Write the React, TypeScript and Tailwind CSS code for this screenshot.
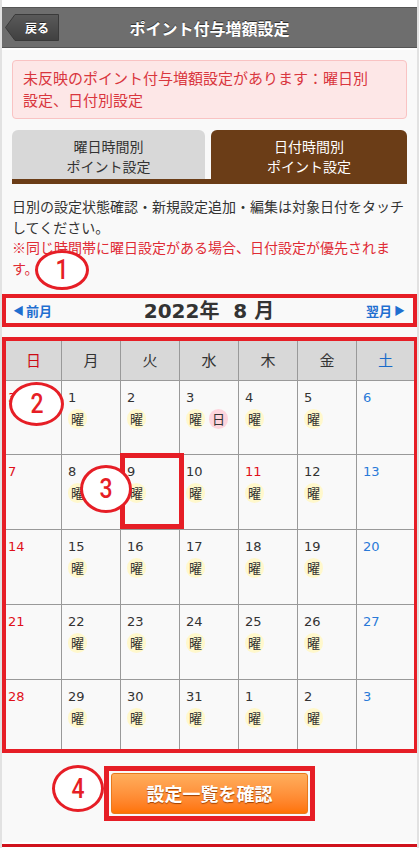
import React from 'react'

type Day = { d: number; c: 'red' | 'blue' | 'dark'; you?: boolean; hi?: boolean }

const WEEK = [
  { t: '日', c: 'text-[#cc0a14]' },
  { t: '月', c: 'text-[#333]' },
  { t: '火', c: 'text-[#333]' },
  { t: '水', c: 'text-[#333]' },
  { t: '木', c: 'text-[#333]' },
  { t: '金', c: 'text-[#333]' },
  { t: '土', c: 'text-[#1a6bc9]' },
]

const weekRow = (start: number): Day[] =>
  Array.from({ length: 7 }, (_, i) => {
    const d = start + i
    if (i === 0) return { d, c: 'red' as const }
    if (i === 6) return { d, c: 'blue' as const }
    return { d, c: 'dark' as const, you: true }
  })

const ROWS: Day[][] = [
  [
    { d: 31, c: 'red' },
    { d: 1, c: 'dark', you: true },
    { d: 2, c: 'dark', you: true },
    { d: 3, c: 'dark', you: true, hi: true },
    { d: 4, c: 'dark', you: true },
    { d: 5, c: 'dark', you: true },
    { d: 6, c: 'blue' },
  ],
  [
    { d: 7, c: 'red' },
    { d: 8, c: 'dark', you: true },
    { d: 9, c: 'dark', you: true },
    { d: 10, c: 'dark', you: true },
    { d: 11, c: 'red', you: true },
    { d: 12, c: 'dark', you: true },
    { d: 13, c: 'blue' },
  ],
  weekRow(14),
  weekRow(21),
  [
    { d: 28, c: 'red' },
    { d: 29, c: 'dark', you: true },
    { d: 30, c: 'dark', you: true },
    { d: 31, c: 'dark', you: true },
    { d: 1, c: 'dark', you: true },
    { d: 2, c: 'dark', you: true },
    { d: 3, c: 'blue' },
  ],
]

const ROW_H = ['h-[73px]', 'h-[74px]', 'h-[74px]', 'h-[74px]', 'h-[69px]']

const dayColor = (c: Day['c']) =>
  c === 'red' ? 'text-[#e0101a]' : c === 'blue' ? 'text-[#2a7ad8]' : 'text-[#333]'

function Marker({ n, className }: { n: number; className: string }) {
  return (
    <div
      className={`absolute rounded-[50%] border-[3px] border-[#e61e26] bg-white flex items-center justify-center text-[#e61e26] text-[28px] leading-none font-medium font-['Roboto',sans-serif] ${className}`}
    >
      <span className="scale-x-[0.82] inline-block">{n}</span>
    </div>
  )
}

export default function App() {
  return (
    <div className="relative w-[419px] h-[848px] bg-white border-x-2 border-[#e2e2e2] font-['Noto_Sans_CJK_JP',sans-serif] overflow-hidden">
      <div className="h-[7px]" />

      {/* Header */}
      <div className="relative h-[41px] bg-[#6e6e6e] border-y border-[#555] flex items-center justify-center">
        <div className="absolute left-[3px] top-[6px] w-[54px] h-[27px]">
          <svg width="54" height="27" viewBox="0 0 54 27" className="absolute inset-0">
            <defs>
              <linearGradient id="bk" x1="0" y1="0" x2="0" y2="1">
                <stop offset="0" stopColor="#5a5a5a" />
                <stop offset="1" stopColor="#404040" />
              </linearGradient>
            </defs>
            <polygon points="0.5,13.5 10,0.5 53.5,0.5 53.5,26.5 10,26.5" fill="url(#bk)" stroke="#3a3a3a" />
          </svg>
          <span className="absolute left-[20px] top-0 h-[27px] flex items-center text-white text-[12px] font-bold [text-shadow:0_-1px_0_#222]">
            戻る
          </span>
        </div>
        <h1 className="text-white text-[16px] font-bold [text-shadow:0_-1px_0_#333]">
          ポイント付与増額設定
        </h1>
      </div>
      <div className="h-[2px] bg-white" />

      {/* Main */}
      <div className="bg-[#f9f9f9] pt-[10px] h-[792px]">
        <div className="mx-[10px] rounded-[4px] border border-[#f9c3c3] bg-[#fde7e7] pl-[10px] pr-[24px] pt-[6px] pb-[7px] text-[15px] leading-[22px] text-[#d9363e]">
          未反映のポイント付与増額設定があります：曜日別設定、日付別設定
        </div>

        {/* Tabs */}
        <div className="mx-[10px] mt-[11px]">
          <div className="flex gap-[6px] h-[49px]">
            <div className="w-[193px] rounded-t-[6px] bg-[#d8d8d8] flex flex-col items-center justify-center text-[14px] leading-[20px] text-[#333] pt-[2px]">
              <span>曜日時間別</span>
              <span>ポイント設定</span>
            </div>
            <div className="flex-1 rounded-t-[6px] bg-[#6b3d17] flex flex-col items-center justify-center text-[14px] leading-[20px] text-white pt-[2px]">
              <span>日付時間別</span>
              <span>ポイント設定</span>
            </div>
          </div>
          <div className="h-[5px] bg-[#6b3d17]" />
        </div>

        <div className="mx-[10px] mt-[12px] text-[14px] leading-[20.5px]">
          <p className="text-[#333]">日別の設定状態確認・新規設定追加・編集は対象日付をタッチしてください。</p>
          <p className="text-[#e02b35]">※同じ時間帯に曜日設定がある場合、日付設定が優先されます。</p>
        </div>

        {/* Month nav */}
        <div className="mt-[16px] border-4 border-[#e61e26] h-[33px] flex items-center justify-between pl-[7px] pr-[8px]">
          <button className="flex items-center gap-[2px] text-[#1f6fd0] text-[13px] font-bold">
            <span className="text-[11px]">◀</span>前月
          </button>
          <div className="font-['DejaVu_Sans','Noto_Sans_CJK_JP',sans-serif] font-bold text-[20px] text-[#333] leading-none">
            2022年&nbsp;&nbsp;8 月
          </div>
          <button className="flex items-center gap-[2px] text-[#1f6fd0] text-[13px] font-bold">
            翌月<span className="text-[11px]">▶</span>
          </button>
        </div>

        {/* Calendar */}
        <div className="mt-[10px] mr-[-1px] border-4 border-[#e61e26]">
          <div className="grid grid-cols-[55px_58px_58px_58px_58px_58px_1fr] gap-px bg-[#999]">
            {WEEK.map((w) => (
              <div key={w.t} className={`h-[39px] bg-[#d8d8d8] flex items-center justify-center text-[15px] ${w.c}`}>
                {w.t}
              </div>
            ))}
            {ROWS.map((row, ri) =>
              row.map((day, ci) => (
                <div
                  key={`${ri}-${ci}`}
                  className={`${ROW_H[ri]} bg-[#f9f9f9] ${ci === 0 ? 'pl-[2px]' : 'pl-[6px]'} pt-[8px]`}
                >
                  <div className={`font-['DejaVu_Sans',sans-serif] text-[13px] leading-[18px] ${dayColor(day.c)}`}>
                    {day.d}
                  </div>
                  {day.you && (
                    <div className="mt-[2px] flex gap-[4px]">
                      <span className="w-[19px] h-[20px] rounded-full bg-[#fff8cc] flex items-center justify-center text-[13px] text-[#333]">
                        曜
                      </span>
                      {day.hi && (
                        <span className="w-[19px] h-[20px] rounded-full bg-[#fdd5dd] flex items-center justify-center text-[13px] text-[#333]">
                          日
                        </span>
                      )}
                    </div>
                  )}
                </div>
              )),
            )}
          </div>
        </div>

        {/* Button */}
        <div className="mt-[13px] mx-auto w-[211px] border-[5px] border-[#e61e26] p-[2px]">
          <button className="w-full h-[41px] rounded-[3px] border border-[#e8791c] bg-gradient-to-b from-[#ffae5c] to-[#ff7300] text-white text-[18px] font-bold [text-shadow:0_1px_1px_#a04000]">
            設定一覧を確認
          </button>
        </div>

        <div className="mt-[23px] h-[3px] bg-[#d0121c]" />
      </div>

      {/* annotations */}
      <div className="absolute left-[118px] top-[453px] w-[64px] h-[76px] border-[5px] border-[#e61e26]" />
      <Marker n={1} className="left-[33px] top-[250px] w-[54px] h-[40px]" />
      <Marker n={2} className="left-[7px] top-[382px] w-[55px] h-[44px]" />
      <Marker n={3} className="left-[78px] top-[465px] w-[52px] h-[48px]" />
      <Marker n={4} className="left-[50px] top-[765px] w-[52px] h-[47px]" />
    </div>
  )
}
